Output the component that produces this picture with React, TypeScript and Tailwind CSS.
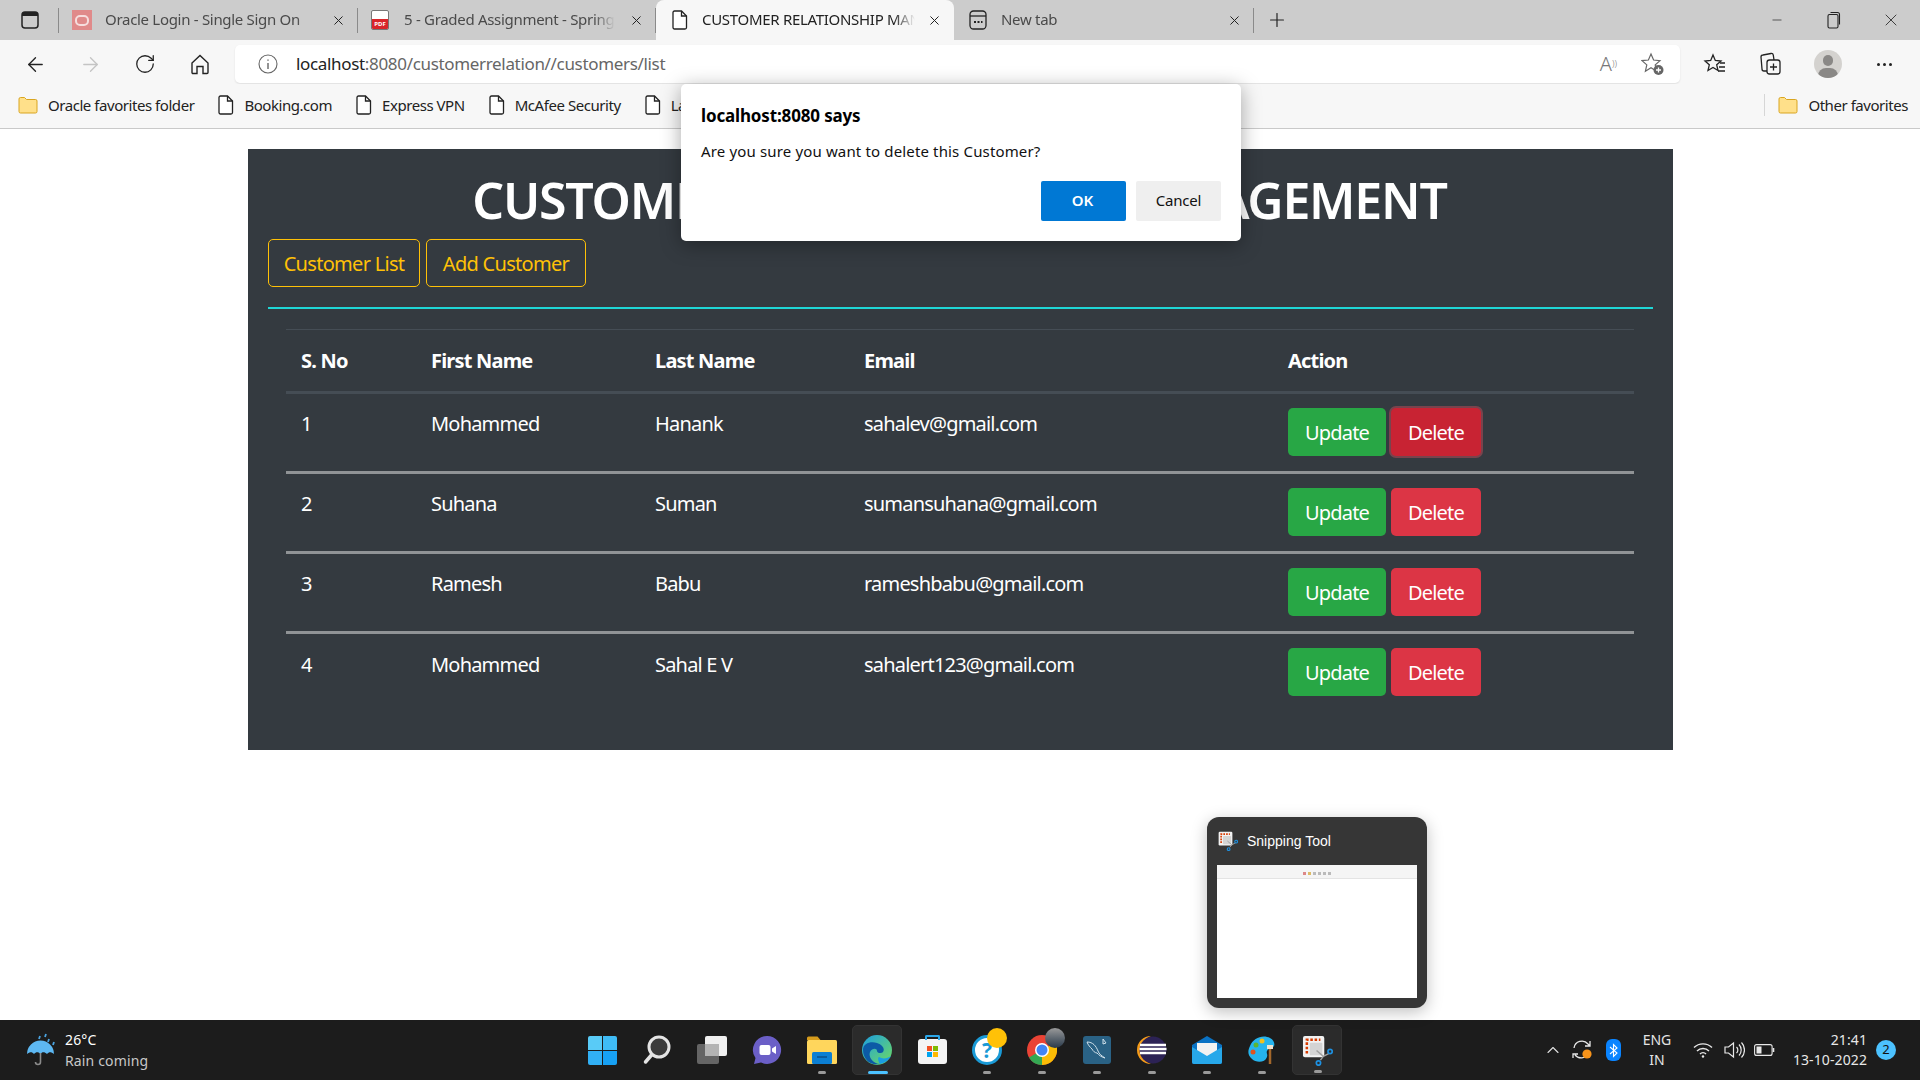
import { ArrowLeft, ArrowRight, ChevronUp, Minus, Plus, RotateCw, X } from 'lucide-react';
import type { ReactNode } from 'react';

const customers = [
  { id: 1, first: 'Mohammed', last: 'Hanank', email: 'sahalev@gmail.com' },
  { id: 2, first: 'Suhana', last: 'Suman', email: 'sumansuhana@gmail.com' },
  { id: 3, first: 'Ramesh', last: 'Babu', email: 'rameshbabu@gmail.com' },
  { id: 4, first: 'Mohammed', last: 'Sahal E V', email: 'sahalert123@gmail.com' },
];

const PageIcon = ({ className = '' }: { className?: string }) => (
  <svg className={className} width="16" height="20" viewBox="0 0 16 20" fill="none" stroke="#222" strokeWidth="1.3">
    <path d="M2.5 1h7l5 5v11.5a1.5 1.5 0 0 1-1.5 1.5h-10.5a1.5 1.5 0 0 1-1.5-1.5v-15a1.5 1.5 0 0 1 1.5-1.5z" fill="#fff" />
    <path d="M9.5 1v5h5" />
  </svg>
);

const FolderIcon = () => (
  <svg width="20" height="20" viewBox="0 0 20 20">
    <path d="M1 4a1.5 1.5 0 0 1 1.5-1.5h4l2 2h9a1.5 1.5 0 0 1 1.5 1.5v10.500a1.5 1.5 0 0 1-1.5 1.5h-15a1.5 1.5 0 0 1-1.5-1.5z" fill="#ffe08a" stroke="#d9a520" strokeWidth="1" />
  </svg>
);

const Tab = ({ icon, title, active = false, sep = true, pad = 'pl-3', gap = 'gap-[13px]', width = 'w-[298px]' }: { icon: ReactNode; title: string; active?: boolean; sep?: boolean; pad?: string; gap?: string; width?: string }) => (
  <div className={`relative flex h-[40px] ${width} shrink-0 items-center ${pad} pr-[14px] ${gap} ${active ? 'rounded-t-[8px] bg-[#f7f7f7] text-[#222]' : 'text-[#4a4a4a]'}`}>
    <div className="flex w-[20px] shrink-0 justify-center">{icon}</div>
    <span className="min-w-0 flex-1 overflow-hidden pb-[1px] text-[15px] tracking-[-0.3px] whitespace-nowrap [mask-image:linear-gradient(to_right,black_90%,transparent)]">{title}</span>
    <X size={15} strokeWidth={1.6} className="mr-[-2px] shrink-0 text-[#222]" />
    {sep && <div className="absolute top-[8px] right-0 h-[25px] w-px bg-[#8a8a8a]" />}
  </div>
);

const Bookmark = ({ label, folder = false }: { label: string; folder?: boolean }) => (
  <div className="flex shrink-0 items-center gap-[10px]">
    {folder ? <FolderIcon /> : <PageIcon />}
    <span className="text-[15px] tracking-[-0.45px] whitespace-nowrap text-[#222]">{label}</span>
  </div>
);

const TaskIcon = ({ children, dot, active }: { children: ReactNode; dot?: boolean; active?: boolean }) => (
  <div className={`relative flex h-[50px] w-[50px] items-center justify-center rounded-[5px] ${active ? 'border border-[#333] bg-[#2b2b2b]' : ''}`}>
    {children}
    {dot && <div className="absolute bottom-[1px] left-[21px] h-[3px] w-[8px] rounded-full bg-[#9a9a9a]" />}
  </div>
);

const SnipIcon = ({ size = 26 }: { size?: number }) => (
  <svg width={size} height={size} viewBox="0 0 32 32">
    <rect x="1" y="1" width="22" height="22" rx="2" fill="#f2f2f2" />
    <rect x="8" y="8" width="13" height="13" rx="1" fill="#d4d4d4" />
    <path d="M5 19V5h14" fill="none" stroke="#d83b01" strokeWidth="2.6" strokeDasharray="2.6 1.8" />
    <path d="M15 16l7 6 6-3M22 22l-3 4" stroke="#a0a0a0" strokeWidth="1.5" fill="none" />
    <circle cx="29" cy="17" r="2.2" fill="none" stroke="#1e90e0" strokeWidth="1.8" />
    <circle cx="17" cy="29" r="2.2" fill="none" stroke="#1e90e0" strokeWidth="1.8" />
  </svg>
);

export default function App() {
  return (
    <div className="relative flex h-screen w-screen flex-col overflow-hidden bg-white font-['Noto_Sans',sans-serif]">
      {/* tab strip */}
      <div className="flex h-[40px] shrink-0 items-center bg-[#cccccc]">
        <div className="relative flex h-[40px] w-[60px] shrink-0 items-center justify-center pr-[1px]">
          <svg width="18" height="18" viewBox="0 0 18 18" className="mr-[-1px]">
            <rect x="1" y="1" width="16" height="16" rx="3" fill="none" stroke="#222" strokeWidth="1.5" />
            <path d="M1 3.5a2.5 2.5 0 0 1 2.5-2.5h11a2.5 2.5 0 0 1 2.5 2.5v1.5h-16z" fill="#222" />
          </svg>
          <div className="absolute top-[8px] right-[1px] h-[25px] w-px bg-[#8a8a8a]" />
        </div>
        <Tab
          title="Oracle Login - Single Sign On"
          icon={
            <div className="flex h-[20px] w-[21px] items-center justify-center bg-[#e08a8a]">
              <div className="h-[11px] w-[14px] rounded-[5px] border-[2.5px] border-[#f6dddd]" />
            </div>
          }
        />
        <Tab
          title="5 - Graded Assignment - Spring Boot"
          gap="gap-[14px]"
          icon={
            <div className="relative h-[20px] w-[18px] overflow-hidden rounded-[2px] border border-[#777] bg-white">
              <div className="absolute right-0 bottom-0 left-0 flex h-[10px] items-center justify-center bg-[#d9252a] text-[6px] leading-none font-bold text-white">PDF</div>
            </div>
          }
        />
        <Tab title="CUSTOMER RELATIONSHIP MANAGEMENT" active sep={false} pad="pl-[14px]" gap="gap-[12px]" icon={<PageIcon />} />
        <Tab
          title="New tab"
          width="w-[300px]"
          pad="pl-[14px]"
          icon={
            <svg width="18" height="20" viewBox="0 0 18 20" fill="none" stroke="#222" strokeWidth="1.3">
              <rect x="1" y="1" width="16" height="18" rx="3.5" />
              <path d="M1 6h16" />
              <path d="M5 12h2M8.5 12h2M12 12h1.5" strokeWidth="1.8" />
            </svg>
          }
        />
        <Plus size={22} strokeWidth={1.3} className="ml-[12px] text-[#222]" />
        <div className="ml-auto flex items-center text-[#222]">
          <Minus size={14} strokeWidth={1.2} className="mr-[43px]" />
          <svg width="14" height="18" viewBox="0 0 14 18" fill="none" stroke="#222" strokeWidth="1.1" className="mr-[40px]">
            <rect x="1" y="3.5" width="10" height="13.5" rx="1.5" />
            <path d="M3.5 1.5h7a2 2 0 0 1 2 2v10" />
          </svg>
          <X size={20} strokeWidth={1} className="mr-[19px]" />
        </div>
      </div>

      {/* address bar */}
      <div className="flex h-[44px] shrink-0 items-center bg-[#f7f7f7] pt-[4px] pr-[25px] pl-[24px] text-[#222]">
        <ArrowLeft size={23} strokeWidth={1.4} />
        <ArrowRight size={23} strokeWidth={1.4} className="ml-[32px] text-[#c4c4c4]" />
        <RotateCw size={22} strokeWidth={1.4} className="ml-[32px]" />
        <svg width="22" height="22" viewBox="0 0 22 22" fill="none" stroke="#222" strokeWidth="1.4" className="ml-[33px]">
          <path d="M3 10l8-7.5 8 7.5v9.5a1 1 0 0 1-1 1h-4v-7h-6v7h-4a1 1 0 0 1-1-1z" />
        </svg>
        <div className="ml-[24px] flex h-[38px] w-[1445px] shrink-0 items-center rounded-[5px] bg-white pr-[15px] pl-[23px] shadow-[0_1px_2px_rgba(0,0,0,0.1)]">
          <svg width="20" height="20" viewBox="0 0 20 20" fill="none" stroke="#666" strokeWidth="1.1">
            <circle cx="10" cy="10" r="9" />
            <path d="M10 9v6M10 5.5v1.3" strokeWidth="1.4" />
          </svg>
          <span className="ml-[18px] text-[17px] tracking-[-0.33px] whitespace-nowrap text-[#666]">
            <span className="text-[#222]">localhost</span>:8080/customerrelation//customers/list
          </span>
          <span className="ml-auto text-[20px] leading-none font-light text-[#777]">A<sup className="text-[9px]">))</sup></span>
          <svg width="24" height="24" viewBox="0 0 24 24" fill="none" stroke="#666" strokeWidth="1.2" className="ml-[24px]">
            <path d="M10 2l2.6 6 6.4.6-4.8 4.3 1.4 6.3-5.6-3.4-5.6 3.4 1.4-6.3-4.8-4.3 6.4-.6z" />
            <circle cx="17.5" cy="18" r="5" fill="#666" stroke="none" />
            <path d="M17.5 15.5v5M15 18h5" stroke="#fff" strokeWidth="1.3" />
          </svg>
        </div>
        <svg width="24" height="24" viewBox="0 0 24 24" fill="none" stroke="#222" strokeWidth="1.3" className="ml-[23px]">
          <path d="M10 3l2.3 5.5 5.7.5-4.3 3.8 1.3 5.7-5-3-5 3 1.3-5.7-4.3-3.8 5.7-.5z" />
          <path d="M17 11h5M16 15h6M15 19h7" />
        </svg>
        <svg width="24" height="26" viewBox="0 0 24 26" fill="none" stroke="#222" strokeWidth="1.3" className="ml-[31px]">
          <rect x="9" y="9" width="13" height="14" rx="2.5" />
          <path d="M15.5 12.5v7M12 16h7" />
          <path d="M9 20H6a2 2 0 0 1-2-2L3 6a2 2 0 0 1 2-2l8-1.5a2 2 0 0 1 2.3 1.6L16 9" />
        </svg>
        <div className="relative ml-[32px] h-[28px] w-[28px] overflow-hidden rounded-full bg-[#d4d2cf]">
          <div className="absolute top-[5px] left-[9px] h-[11px] w-[10px] rounded-full bg-[#8a8886]" />
          <div className="absolute top-[18px] left-[4px] h-[16px] w-[20px] rounded-full bg-[#8a8886]" />
        </div>
        <div className="ml-[35px] flex gap-[3px]">
          <div className="h-[3px] w-[3px] rounded-full bg-[#222]" />
          <div className="h-[3px] w-[3px] rounded-full bg-[#222]" />
          <div className="h-[3px] w-[3px] rounded-full bg-[#222]" />
        </div>
      </div>

      {/* favorites bar */}
      <div className="flex h-[45px] shrink-0 items-center gap-[24px] border-b border-[#c9c9c9] bg-[#f7f7f7] pr-[12px] pb-[2px] pl-[18px]">
        <Bookmark label="Oracle favorites folder" folder />
        <Bookmark label="Booking.com" />
        <Bookmark label="Express VPN" />
        <Bookmark label="McAfee Security" />
        <Bookmark label="Latest" />
        <div className="ml-auto flex items-center gap-[13px]">
          <div className="h-[22px] w-px bg-[#d6d6d6]" />
          <Bookmark label="Other favorites" folder />
        </div>
      </div>

      {/* page */}
      <main className="min-h-0 flex-1 pt-[20px] pl-[248px]">
        <div className="flex h-[601px] w-[1425px] flex-col bg-[#343a40] px-[20px] text-white">
          <h1 className="mt-[16px] h-[74px] pr-[2px] text-center text-[50px] leading-[70px] font-semibold tracking-[-1.2px]">CUSTOMER RELATIONSHIP MANAGEMENT</h1>
          <div className="flex gap-[6px]">
            <button className="h-[48px] w-[152px] rounded-[5px] border border-[#ffc107] pt-[1px] text-[20px] tracking-[-0.7px] text-[#ffc107]">Customer List</button>
            <button className="h-[48px] w-[160px] rounded-[5px] border border-[#ffc107] pt-[1px] text-[20px] tracking-[-0.7px] text-[#ffc107]">Add Customer</button>
          </div>
          <div className="mt-[20px] h-[2px] bg-[#1fd6d6]" />
          <table className="mx-[18px] mt-[20px] w-[1348px] table-fixed border-collapse text-left text-[20px] tracking-[-0.8px]">
            <colgroup>
              <col className="w-[130px]" />
              <col className="w-[223px]" />
              <col className="w-[209px]" />
              <col className="w-[424px]" />
              <col className="w-[362px]" />
            </colgroup>
            <thead>
              <tr className="h-[63px] border-t border-b-[3px] border-t-[#454d55] border-b-[#454d55]">
                <th className="pl-[15px] font-bold">S. No</th>
                <th className="pl-[15px] font-bold">First Name</th>
                <th className="pl-[16px] font-bold">Last Name</th>
                <th className="pl-[16px] font-bold">Email</th>
                <th className="pl-[16px] font-bold">Action</th>
              </tr>
            </thead>
            <tbody>
              {customers.map((c, i) => (
                <tr key={c.id} className={`h-[80px] ${i < 3 ? 'border-b-[3px] border-b-[#909396]' : ''}`}>
                  <td className="pb-[17px] pl-[15px]">{c.id}</td>
                  <td className="pb-[17px] pl-[15px]">{c.first}</td>
                  <td className="pb-[17px] pl-[16px]">{c.last}</td>
                  <td className="pb-[17px] pl-[16px]">{c.email}</td>
                  <td className="pb-[2px] pl-[16px]">
                    <div className="flex gap-[5px]">
                      <button className="h-[48px] w-[98px] rounded-[5px] bg-[#28a745] pt-[2px] text-white">Update</button>
                      <button className={`h-[48px] w-[90px] rounded-[5px] pt-[2px] text-white ${i === 0 ? 'bg-[#c82333] shadow-[0_0_0_2px_rgba(225,83,97,0.4)]' : 'bg-[#dc3545]'}`}>Delete</button>
                    </div>
                  </td>
                </tr>
              ))}
            </tbody>
          </table>
        </div>
      </main>

      {/* taskbar */}
      <div className="flex h-[60px] shrink-0 items-center bg-[#1c1c1c] text-white">
        <div className="flex w-[577px] shrink-0 items-center pl-[26px]">
          <svg width="31" height="34" viewBox="0 0 31 34">
            <path d="M1 21a13.5 13.5 0 0 1 27 0c-3-2.5-5-2.5-7 0-2.5-2.5-5-2.5-6.5 0-2-2.5-4.5-2.5-6.5 0-2-2.5-4-2.5-7 0z" fill="#5db8f2" />
            <path d="M14.5 20v9a2.5 2.5 0 0 1-5 0" fill="none" stroke="#8a8a8a" strokeWidth="1.6" />
            <path d="M14 3l-1 3M20 1l-1 3M23 6l-1 3M28 9l-1 3" stroke="#4aa3e0" strokeWidth="1.8" />
          </svg>
          <div className="ml-[8px] flex flex-col text-[14px] leading-[21px] tracking-[0.15px]">
            <span>26°C</span>
            <span className="text-[#c8c8c8]">Rain coming</span>
          </div>
        </div>
        <div className="flex gap-[5px]">
          <TaskIcon>
            <div className="grid h-[29px] w-[29px] grid-cols-2 gap-[1px]">
              <div className="rounded-tl-[2px] bg-[#59cbf7]" />
              <div className="rounded-tr-[2px] bg-[#3fbcf6]" />
              <div className="rounded-bl-[2px] bg-[#31b0f5]" />
              <div className="rounded-br-[2px] bg-[#17a1f4]" />
            </div>
          </TaskIcon>
          <TaskIcon>
            <svg width="28" height="30" viewBox="0 0 28 30">
              <circle cx="16" cy="12" r="10" fill="#3a3a3a" stroke="#e4e4e4" strokeWidth="3" />
              <path d="M8.5 20l-6 7" stroke="#e4e4e4" strokeWidth="3.5" strokeLinecap="round" />
            </svg>
          </TaskIcon>
          <TaskIcon>
            <svg width="32" height="30" viewBox="0 0 32 30">
              <rect x="9" y="1" width="22" height="20" rx="2" fill="#f0f0f0" />
              <rect x="1" y="9" width="22" height="20" rx="2" fill="#6e6e6e" fillOpacity="0.9" />
              <rect x="9" y="9" width="14" height="12" fill="#b4b4b4" />
            </svg>
          </TaskIcon>
          <TaskIcon>
            <svg width="30" height="30" viewBox="0 0 30 30">
              <path d="M15 1a14 14 0 1 1-6 26.6L2 29l1.5-6A14 14 0 0 1 15 1z" fill="#6b5fc7" />
              <rect x="7.5" y="10" width="11" height="10" rx="2" fill="#fff" />
              <path d="M20 13.5l4-2.5v8l-4-2.5z" fill="#fff" />
            </svg>
          </TaskIcon>
          <TaskIcon dot>
            <svg width="30" height="28" viewBox="0 0 30 28">
              <path d="M0 2a1.5 1.5 0 0 1 1.5-1.5h9l3 3.5h-13.5z" fill="#d69c1c" />
              <rect x="0" y="4" width="30" height="24" rx="1.5" fill="#ffd65c" />
              <rect x="5" y="16" width="20" height="12" rx="1.5" fill="#0c7fd3" />
              <path d="M10 21h10" stroke="#0b4f8a" strokeWidth="1.5" />
            </svg>
          </TaskIcon>
          <TaskIcon active>
            <svg width="30" height="30" viewBox="0 0 30 30">
              <defs>
                <linearGradient id="edgeTop" x1="0" y1="0" x2="1" y2="1">
                  <stop offset="0" stopColor="#1b9de2" />
                  <stop offset="1" stopColor="#6fdc5f" />
                </linearGradient>
              </defs>
              <circle cx="15" cy="15" r="15" fill="url(#edgeTop)" />
              <path d="M1 15C1 8 9 6 15 8c6 2 8 6 6 9-2 2-6 1-6-1 0-3-5-3-7 1-2 5 3 12 10 12C8 31 1 24 1 15z" fill="#0c5aa6" />
              <path d="M18 29c5-1 9-4 11-8-4 3-9 3-12 1-2 1 0 6 1 7z" fill="#1b9de2" />
            </svg>
            <div className="absolute bottom-0 left-[15px] h-[3px] w-[20px] rounded-full bg-[#4cc2ff]" />
          </TaskIcon>
          <TaskIcon>
            <div className="relative mt-[2px] h-[25px] w-[29px] rounded-[3px] bg-[#f4f4f4]">
              <div className="absolute top-[-4px] left-[7px] h-[5px] w-[15px] rounded-t-[2px] border-x-2 border-t-2 border-[#2ba6e8]" />
              <div className="absolute top-[7px] left-[9px] grid grid-cols-2 gap-[1px]">
                <div className="h-[5px] w-[5px] bg-[#f25022]" />
                <div className="h-[5px] w-[5px] bg-[#7fba00]" />
                <div className="h-[5px] w-[5px] bg-[#00a4ef]" />
                <div className="h-[5px] w-[5px] bg-[#ffb900]" />
              </div>
            </div>
          </TaskIcon>
          <TaskIcon dot>
            <div className="flex h-[30px] w-[30px] items-center justify-center rounded-full border-[3px] border-[#1a9ad6] bg-white text-[21px] leading-none font-bold text-[#1a9ad6]">?</div>
            <div className="absolute top-[3px] left-[25px] h-[20px] w-[20px] rounded-full bg-[#ffc107]" />
          </TaskIcon>
          <TaskIcon dot>
            <svg width="30" height="30" viewBox="0 0 30 30">
              <circle cx="15" cy="15" r="15" fill="#ea4335" />
              <path d="M15 15L2 22.5A15 15 0 0 0 15 30z" fill="#34a853" />
              <path d="M15 15l0 15A15 15 0 0 0 28 7.5z" fill="#fbbc05" />
              <circle cx="15" cy="15" r="7" fill="#fff" />
              <circle cx="15" cy="15" r="5.5" fill="#4285f4" />
            </svg>
            <div className="absolute top-[3px] left-[28px] h-[20px] w-[20px] rounded-full bg-gradient-to-b from-[#9a9a9a] to-[#2a3a4a]" />
          </TaskIcon>
          <TaskIcon dot>
            <div className="flex h-[28px] w-[28px] items-center justify-center rounded-[3px] bg-[#2a6285]">
              <svg width="24" height="24" viewBox="0 0 24 24" fill="none" stroke="#cfe0ea" strokeWidth="1">
                <path d="M2 4c6 0 9 4 11 9 1 3 4 5 7 7-4-1-6-3-8-5-2 0-4-2-5-4-2-2-4-4-5-7zM18 1l3 4-3 1z" />
              </svg>
            </div>
          </TaskIcon>
          <TaskIcon dot>
            <svg width="30" height="28" viewBox="0 0 30 28">
              <path d="M14 0a14 14 0 1 0 0 28C8 26 5 20 5 14S8 2 14 0z" fill="#f59c1a" />
              <circle cx="16" cy="14" r="13.5" fill="#2c2255" />
              <path d="M3 9h26M2.5 13h27M3 17h26" stroke="#fff" strokeWidth="2.3" />
            </svg>
          </TaskIcon>
          <TaskIcon dot>
            <svg width="30" height="28" viewBox="0 0 30 28">
              <path d="M0 9L15 0l15 9v17a2 2 0 0 1-2 2H2a2 2 0 0 1-2-2z" fill="#0a72c4" />
              <path d="M5 7h20v8l-10 6-10-6z" fill="#f2f2f2" />
              <path d="M0 11l15 9 15-9v15a2 2 0 0 1-2 2H2a2 2 0 0 1-2-2z" fill="#27a8ea" />
            </svg>
          </TaskIcon>
          <TaskIcon dot>
            <svg width="30" height="30" viewBox="0 0 30 30">
              <path d="M3 11C6 3 16-1 23 3c4 2 5 6 4 8-2 3-6 2-7 5-1 2 1 3 0 6-2 6-11 6-15 2C0 20 1 15 3 11z" fill="#25b4ee" />
              <circle cx="9" cy="10" r="2.5" fill="#5cb531" />
              <circle cx="15" cy="6" r="2.5" fill="#f3c01c" />
              <circle cx="6" cy="17" r="2.5" fill="#e2531d" />
              <path d="M23 14v15" stroke="#a3672b" strokeWidth="2.5" />
              <path d="M20 10h6v4h-6z" fill="#efe3cf" />
            </svg>
          </TaskIcon>
          <TaskIcon dot active>
            <SnipIcon size={31} />
          </TaskIcon>
        </div>
        <div className="ml-auto flex items-center pr-[24px]">
          <ChevronUp size={20} strokeWidth={1.3} className="text-[#e0e0e0]" />
          <svg width="22" height="22" viewBox="0 0 22 22" fill="none" stroke="#e8e8e8" strokeWidth="1.3" className="ml-[9px]">
            <path d="M2 9a8 8 0 0 1 14-4l2 2M18 2v5h-5M16 15a8 8 0 0 1-13 1M1 19v-4h5" />
            <circle cx="15" cy="15" r="4.6" fill="#f7931a" stroke="none" />
          </svg>
          <div className="ml-[12px] flex h-[22px] w-[15px] items-center justify-center rounded-[6px] bg-[#0a84ff]">
            <svg width="9" height="15" viewBox="0 0 9 15" fill="none" stroke="#fff" strokeWidth="1.1">
              <path d="M1 4l7 6-3.5 3.5v-12L8 5l-7 6" />
            </svg>
          </div>
          <div className="ml-[18px] flex w-[36px] flex-col items-center text-[14px] leading-[20px] text-[#e4e4e4]">
            <span>ENG</span>
            <span>IN</span>
          </div>
          <svg width="20" height="16" viewBox="0 0 20 16" fill="none" stroke="#e8e8e8" strokeWidth="1.4" className="ml-[18px]">
            <path d="M1 5.5a13 13 0 0 1 18 0M4 9a8.5 8.5 0 0 1 12 0M7 12a4 4 0 0 1 6 0" />
            <circle cx="10" cy="14.5" r="1.2" fill="#e8e8e8" stroke="none" />
          </svg>
          <svg width="21" height="18" viewBox="0 0 21 18" fill="none" stroke="#e8e8e8" strokeWidth="1.2" className="ml-[11px]">
            <path d="M1 6h3.5L9.5 2v14l-5-4H1z" />
            <path d="M12.5 6a4 4 0 0 1 0 6M15 3.5a8 8 0 0 1 0 11M17.5 1.5a11 11 0 0 1 0 15" />
          </svg>
          <svg width="21" height="12" viewBox="0 0 21 12" fill="none" stroke="#e8e8e8" strokeWidth="1.1" className="ml-[9px]">
            <rect x="0.6" y="0.6" width="17.5" height="10.8" rx="2" />
            <rect x="2.5" y="2.5" width="5" height="7" fill="#e8e8e8" stroke="none" />
            <path d="M19.5 4v4" strokeWidth="1.6" />
          </svg>
          <div className="ml-[18px] flex w-[74px] flex-col items-end text-[14px] leading-[20px] tracking-[0.1px] whitespace-nowrap text-[#e8e8e8]">
            <span>21:41</span>
            <span>13-10-2022</span>
          </div>
          <div className="ml-[9px] flex h-[20px] w-[20px] items-center justify-center rounded-full bg-[#4cc2ff] text-[13px] text-[#111]">2</div>
        </div>
      </div>

      {/* javascript confirm dialog */}
      <div className="absolute top-[84px] left-[681px] flex h-[157px] w-[560px] flex-col rounded-[5px] bg-white px-[20px] pt-[21px] shadow-[0_4px_20px_rgba(0,0,0,0.35)]">
        <div className="text-[17px] leading-[22px] font-bold tracking-[-0.15px] text-black">localhost:8080 says</div>
        <div className="mt-[14px] text-[15px] leading-[20px] tracking-[0.15px] text-[#111]">Are you sure you want to delete this Customer?</div>
        <div className="mt-[20px] flex justify-end gap-[10px]">
          <div className="flex h-[40px] w-[85px] items-center justify-center rounded-[2px] bg-[#0078d4] pr-[2px] pb-[1px] text-[15px] font-semibold text-white">OK</div>
          <div className="flex h-[40px] w-[85px] items-center justify-center rounded-[2px] bg-[#efefef] pb-[1px] text-[15px] tracking-[-0.2px] text-[#111]">Cancel</div>
        </div>
      </div>

      {/* taskbar hover preview */}
      <div className="absolute top-[817px] left-[1207px] flex h-[191px] w-[220px] flex-col rounded-[12px] bg-[#363636] px-[10px] shadow-[0_4px_16px_rgba(0,0,0,0.25)]">
        <div className="flex h-[48px] items-center gap-[9px] pl-[1px]">
          <SnipIcon size={20} />
          <span className="font-['Liberation_Sans',sans-serif] text-[14px] text-white">Snipping Tool</span>
        </div>
        <div className="h-[133px] bg-white">
          <div className="flex h-[14px] items-end justify-center gap-[2px] border-b border-[#e4e4e4] bg-[#f5f5f5] pb-[3px]">
            <div className="h-[3px] w-[3px] bg-[#d88]" />
            <div className="h-[3px] w-[3px] bg-[#db6]" />
            <div className="h-[3px] w-[3px] bg-[#bbb]" />
            <div className="h-[3px] w-[3px] bg-[#bbb]" />
            <div className="h-[3px] w-[3px] bg-[#bbb]" />
            <div className="h-[3px] w-[3px] bg-[#bbb]" />
          </div>
        </div>
      </div>
    </div>
  );
}
